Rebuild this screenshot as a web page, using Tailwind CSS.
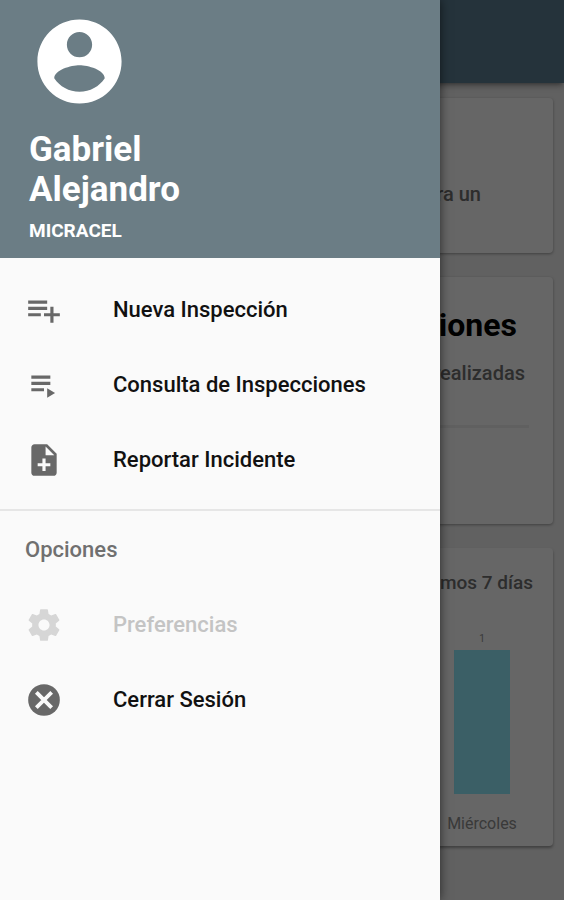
<!DOCTYPE html>
<html lang="es">
<head>
<meta charset="utf-8">
<meta name="viewport" content="width=device-width, initial-scale=1">
<title>Inspecciones</title>
<script src="https://cdn.jsdelivr.net/npm/@tailwindcss/browser@4"></script>
</head>
<body class="font-[Roboto,sans-serif] bg-[#f2f2f2]">
<div class="relative min-h-screen overflow-hidden">

  <!-- Dashboard -->
  <div>
    <header class="h-[83px] bg-[#5d8094] shadow-md shadow-black/30"></header>
    <main class="flex flex-col gap-6 px-[11px] pt-[15px] text-right font-medium text-[#707070]">
      <section class="h-[155px] rounded bg-white pr-[72px] pt-[84px] text-xl leading-6 shadow-[0_1px_3px_rgba(0,0,0,0.35)]">
        <p>para un</p>
      </section>
      <section class="h-[247px] rounded bg-white px-6 pt-7 shadow-[0_1px_3px_rgba(0,0,0,0.35)]">
        <h2 class="pr-3 text-[32px] leading-10 font-bold text-black">Inspecciones</h2>
        <p class="mt-4 pr-1 text-xl leading-6">realizadas</p>
        <hr class="mt-10 border-t-3 border-[#efefef]">
      </section>
      <section class="flex h-[298px] flex-col items-end rounded bg-white pt-[23px] shadow-[0_2px_3px_rgba(0,0,0,0.35)]">
        <h3 class="pr-5 text-[19px] leading-6">últimos 7 días</h3>
        <figure class="mt-9 mr-[31px] flex w-20 flex-col items-center font-normal text-[#909090]">
          <span class="text-[10px] leading-4">1</span>
          <div class="mt-[3px] h-36 w-14 bg-[#94edff]"></div>
          <figcaption class="mt-5 text-base leading-5">Miércoles</figcaption>
        </figure>
      </section>
    </main>
  </div>

  <div class="absolute inset-0 bg-black/60"></div>

  <!-- Navigation drawer -->
  <aside class="absolute inset-y-0 left-0 w-[78%] bg-[#fafafa] text-[22px] font-medium text-[#111] shadow-[0_0_10px_rgba(0,0,0,0.6)]">
    <div class="h-[258px] bg-[#6b7d85] pl-[29px] pt-[11px] text-white">
      <svg class="size-[101px]" viewBox="0 0 24 24" fill="currentColor" aria-hidden="true"><path d="M12 2C6.480 2 2 6.480 2 12s4.480 10 10 10 10-4.480 10-10S17.520 2 12 2zm0 3c1.660 0 3 1.340 3 3s-1.340 3-3 3-3-1.340-3-3 1.340-3 3-3zm0 14.200c-2.500 0-4.710-1.280-6-3.220.03-1.990 4-3.080 6-3.080 1.990 0 5.970 1.090 6 3.080-1.290 1.940-3.500 3.220-6 3.220z"/></svg>
      <h1 class="mt-[18px] w-40 text-[35px] leading-10 font-bold">Gabriel Alejandro</h1>
      <p class="mt-[7px] text-[19px] leading-7 font-bold">MICRACEL</p>
    </div>
    <nav>
      <ul class="pt-[14px] pb-3">
        <li><a href="#nueva" class="flex h-[75px] items-center gap-[50px] pl-[25px]">
          <svg class="size-[38px] text-[#686868]" viewBox="0 0 24 24" fill="currentColor" aria-hidden="true"><path d="M14 10H2v2h12v-2zm0-4H2v2h12V6zm4 8v-4h-2v4h-4v2h4v4h2v-4h4v-2h-4zM2 16h8v-2H2v2z"/></svg>
          Nueva Inspección</a></li>
        <li><a href="#consulta" class="flex h-[75px] items-center gap-[50px] pl-[25px]">
          <svg class="size-[38px] text-[#686868]" viewBox="0 0 24 24" fill="currentColor" aria-hidden="true"><path d="M4 10h12v2H4zM4 6h12v2H4zM4 14h8v2H4zM14 14v6l5-3z"/></svg>
          Consulta de Inspecciones</a></li>
        <li><a href="#reportar" class="flex h-[75px] items-center gap-[50px] pl-[25px]">
          <svg class="size-[38px] text-[#686868]" viewBox="0 0 24 24" fill="currentColor" aria-hidden="true"><path d="M14 2H6c-1.100 0-1.990.9-1.990 2L4 20c0 1.100.89 2 1.990 2H18c1.100 0 2-.9 2-2V8l-6-6zm2 14h-3v3h-2v-3H8v-2h3v-3h2v3h3v2zm-3-7V3.500L18.500 9H13z"/></svg>
          Reportar Incidente</a></li>
      </ul>
      <hr class="border-t-2 border-[#e6e6e6]">
      <h2 class="flex h-[76px] items-center pl-[25px] text-[#707070]">Opciones</h2>
      <ul>
        <li><button type="button" disabled class="flex h-[75px] w-full items-center gap-[50px] pl-[25px] text-[#c4c4c4]">
          <svg class="size-[38px] text-[#d6d6d6]" viewBox="0 0 24 24" fill="currentColor" aria-hidden="true"><path d="M19.430 12.980c.04-.32.07-.64.07-.98s-.03-.66-.07-.98l2.110-1.650c.19-.15.24-.42.12-.64l-2-3.460c-.12-.22-.39-.3-.61-.22l-2.490 1c-.52-.4-1.080-.73-1.690-.98l-.38-2.650C14.460 2.180 14.250 2 14 2h-4c-.25 0-.46.18-.49.42l-.38 2.650c-.61.25-1.170.59-1.690.98l-2.490-1c-.23-.09-.49 0-.61.22l-2 3.460c-.13.22-.07.49.12.64l2.110 1.650c-.04.32-.07.65-.07.98s.03.66.07.98l-2.110 1.650c-.19.15-.24.42-.12.64l2 3.460c.12.22.39.3.61.22l2.490-1c.52.4 1.080.73 1.690.98l.38 2.650c.03.24.24.42.49.42h4c.25 0 .46-.18.49-.42l.38-2.650c.61-.25 1.170-.59 1.690-.98l2.490 1c.23.09.49 0 .61-.22l2-3.460c.12-.22.07-.49-.12-.64l-2.110-1.650zM12 15.500c-1.930 0-3.500-1.570-3.500-3.500s1.570-3.500 3.500-3.500 3.500 1.570 3.500 3.500-1.570 3.500-3.500 3.500z"/></svg>
          Preferencias</button></li>
        <li><button type="button" class="flex h-[75px] w-full items-center gap-[50px] pl-[25px]">
          <svg class="size-[38px] text-[#686868]" viewBox="0 0 24 24" aria-hidden="true"><circle cx="12" cy="12" r="10" fill="currentColor"/><path d="M8 8l8 8M16 8l-8 8" fill="none" stroke="#fafafa" stroke-width="2.400" stroke-linecap="square"/></svg>
          Cerrar Sesión</button></li>
      </ul>
    </nav>
  </aside>
</div>
</body>
</html>
